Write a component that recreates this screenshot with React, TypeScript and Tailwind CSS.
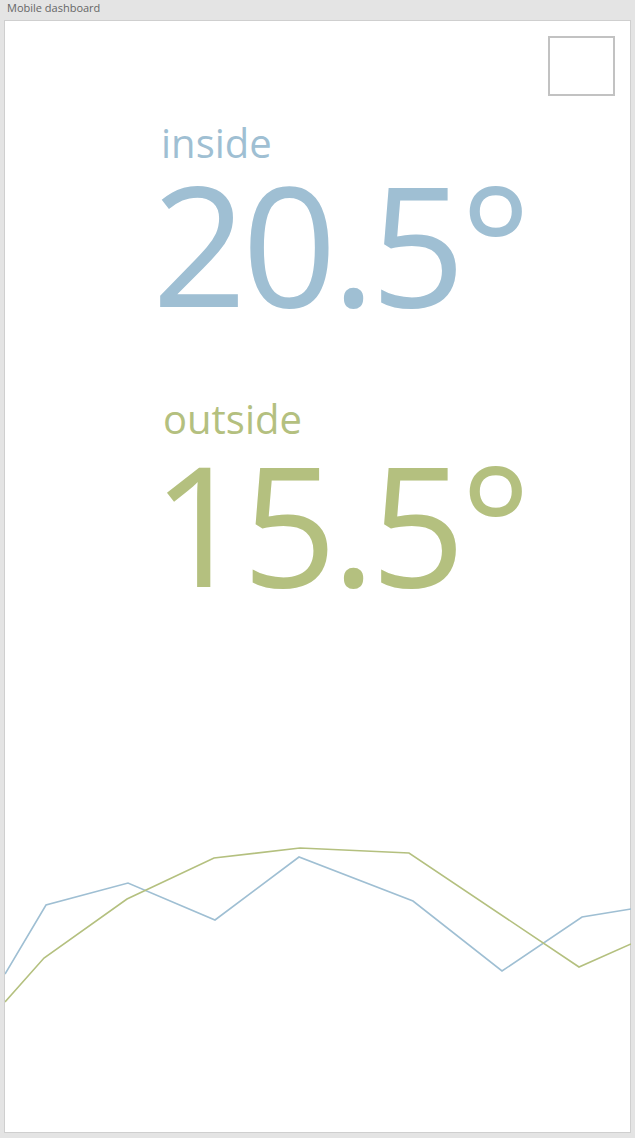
import React from 'react';

const FONT = { fontFamily: '"Open Sans", "Noto Sans", "Liberation Sans", sans-serif' };

// chart points in panel coordinates (x from panel left, y from chart top)
const insideSeries: [number, number][] = [
  [0, 144], [41, 75], [123, 53], [210, 90], [294, 27], [408, 71], [497, 141], [577, 87], [626, 79],
];
const outsideSeries: [number, number][] = [
  [0, 172], [39, 128], [122, 69], [209, 28], [295, 18], [404, 23], [574, 137], [626, 114],
];

function toPoints(s: [number, number][]) {
  return s.map(([x, y]) => `${x},${y}`).join(' ');
}

function Reading({ label, value, color, labelPad, gapTop }: { label: string; value: string; color: string; labelPad: string; gapTop: string }) {
  return (
    <div className="flex flex-col" style={{ color }}>
      <div className={`text-[40px] leading-[46px] font-normal ${labelPad}`} style={FONT}>
        {label}
      </div>
      <div className={`text-[166px] leading-[150px] font-normal tracking-[-5px] ${gapTop}`} style={FONT}>
        {value}
      </div>
    </div>
  );
}

export default function App() {
  return (
    <div className="w-[635px] h-[1138px] bg-[#e4e4e4] flex flex-col">
      <div className="h-5 pl-[7px] text-[11px] leading-4 text-[#666]" style={FONT}>
        Mobile dashboard
      </div>
      <div className="mx-1 h-[1113px] bg-white border border-[#cfcfcf] flex flex-col">
        {/* top bar with the empty menu box */}
        <div className="flex justify-end pt-[15px] pr-[15px]">
          <div className="w-[67px] h-[60px] border-2 border-[#c2c2c2]" />
        </div>

        <div className="flex flex-col pl-[147px] mt-[24px] gap-[78px]">
          <Reading label="inside" value="20.5°" color="#9fbfd3" labelPad="pl-[9px]" gapTop="mt-[2px]" />
          <Reading label="outside" value="15.5°" color="#b4c07f" labelPad="pl-[11px]" gapTop="mt-[6px]" />
        </div>

        <div className="mt-auto mb-[102px]">
          <svg width="626" height="200" viewBox="0 0 626 200" className="block">
            <polyline points={toPoints(insideSeries)} fill="none" stroke="#9fbfd3" strokeWidth="1.6" />
            <polyline points={toPoints(outsideSeries)} fill="none" stroke="#b4c07f" strokeWidth="1.6" />
          </svg>
        </div>
      </div>
    </div>
  );
}
